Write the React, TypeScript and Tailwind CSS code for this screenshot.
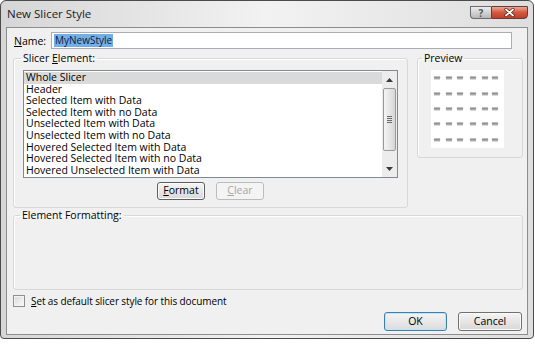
import React from "react";

const items = [
  "Whole Slicer",
  "Header",
  "Selected Item with Data",
  "Selected Item with no Data",
  "Unselected Item with Data",
  "Unselected Item with no Data",
  "Hovered Selected Item with Data",
  "Hovered Selected Item with no Data",
  "Hovered Unselected Item with Data",
];

function U({ c }: { c: string }) {
  return <span className="underline underline-offset-[1px] decoration-[1px]">{c}</span>;
}

function PreviewGrid() {
  const xs = [3, 15, 26, 39, 51, 61];
  const ys = [6, 22, 37, 52, 68];
  const paths: string[] = [];
  for (const y of ys) {
    for (const x of xs) {
      let d = `M${x} ${y + 2}`;
      for (let i = 1; i <= 6; i++) {
        d += ` L${x + i} ${i % 2 === 0 ? y + 2 : y + 0.4}`;
      }
      d += ` M${x} ${y + 2.8} L${x + 6} ${y + 2.8}`;
      paths.push(d);
    }
  }
  return (
    <svg width="73" height="78" viewBox="0 0 73 78">
      {paths.map((d, i) => (
        <path key={i} d={d} fill="none" stroke="#666666" strokeWidth="0.8" />
      ))}
    </svg>
  );
}

function Arrow({ up }: { up?: boolean }) {
  return (
    <svg width="7" height="4" viewBox="0 0 7 4">
      <polygon points={up ? "0,4 7,4 3.5,0" : "0,0 7,0 3.5,4"} fill="#3a3a3a" />
    </svg>
  );
}

export default function App() {
  return (
    <div className="w-[535px] h-[344px] bg-white font-['Open_Sans',sans-serif] text-[10.5px] text-black">
      <div className="w-[534px] h-[339px] flex flex-col border border-[#4b4b4b] rounded-t-[6px] rounded-b-[4px] bg-gradient-to-r from-[#d6d6d6] via-[#f2f2f2] to-[#dedede] px-[5px] pb-[3px]">
        {/* Title bar */}
        <div className="h-[26px] flex items-start justify-between">
          <div className="pl-[1px] pt-[5px] text-[11.5px] leading-[16px] text-[#1a1a1a]">New Slicer Style</div>
          <div className="flex mt-[5px]">
            <div className="w-[21px] h-[13px] flex items-center justify-center border border-[#6a6a6a] border-r-0 rounded-bl-[4px] bg-gradient-to-b from-[#ececec] to-[#b9b9b9] text-[10px] leading-[10px] font-bold text-[#555]">
              ?
            </div>
            <div className="w-[37px] h-[13px] flex items-center justify-center border border-[#6a3a34] rounded-br-[4px] bg-gradient-to-b from-[#e9a898] via-[#d2583f] to-[#c0402a]">
              <svg width="11" height="9" viewBox="0 0 11 9">
                <path d="M2 1.5 L9 7.5 M9 1.5 L2 7.5" stroke="#5a1c14" strokeWidth="3.2" strokeLinecap="round" />
                <path d="M2 1.5 L9 7.5 M9 1.5 L2 7.5" stroke="#ffffff" strokeWidth="1.8" strokeLinecap="round" />
              </svg>
            </div>
          </div>
        </div>

        {/* Client area */}
        <div className="flex-1 flex flex-col border border-[#8d8d8d] bg-[#f0f0f0] pl-[6px] pr-[4px]">
          {/* Name row */}
          <div className="mt-[4px] h-[17px] flex items-center">
            <div className="w-[38px] pl-[1px] leading-[14px]">
              <U c="N" />ame:
            </div>
            <div className="w-[461px] h-[17px] border border-[#abadb3] bg-white flex items-center pl-[2px]">
              <span className="bg-[#74aee8] text-[#0c1c3a] text-[10px] leading-[13px] px-[1px]">MyNewStyle</span>
            </div>
          </div>

          {/* Top groups */}
          <div className="mt-[2px] flex items-start gap-[9px]">
            <fieldset className="w-[395px] p-0 border border-[#d5d9dc] rounded-[3px] shadow-[inset_1px_1px_0_#ffffff]">
              <legend className="ml-[7px] px-[2px] leading-[14px]">
                Slicer <U c="E" />lement:
              </legend>
              <div className="px-[9px] pt-[5px] pb-[7px]">
                <div className="h-[108px] border border-[#828790] bg-white flex">
                  <div className="flex-1 pt-[1px]">
                    {items.map((t, i) => (
                      <div
                        key={t}
                        className={`h-[11.6px] leading-[11.6px] pl-[2px] whitespace-nowrap ${i === 0 ? "bg-[#dadada]" : ""}`}
                      >
                        {t}
                      </div>
                    ))}
                  </div>
                  <div className="w-[15px] bg-[#ececec] flex flex-col">
                    <div className="h-[17px] flex items-center justify-center">
                      <Arrow up />
                    </div>
                    <div className="mx-[1px] h-[63px] border border-[#9a9a9a] rounded-[2px] bg-gradient-to-r from-[#f4f4f4] via-[#e6e6e6] to-[#d6d6d6] flex flex-col items-center justify-center gap-[1px]">
                      <div className="w-[5px] h-[1px] bg-[#6a6a6a]" />
                      <div className="w-[5px] h-[1px] bg-[#6a6a6a]" />
                      <div className="w-[5px] h-[1px] bg-[#6a6a6a]" />
                      <div className="w-[5px] h-[1px] bg-[#6a6a6a]" />
                    </div>
                    <div className="flex-1" />
                    <div className="h-[17px] flex items-center justify-center">
                      <Arrow />
                    </div>
                  </div>
                </div>
                <div className="mt-[4px] flex justify-center gap-[11px]">
                  <div className="w-[48px] h-[18px] flex items-center justify-center border border-[#5f5f5f] rounded-[3px] bg-gradient-to-b from-[#f5f5f5] to-[#d9d9d9] shadow-[inset_0_0_0_1px_#fbfbfb]">
                    <span>
                      <U c="F" />ormat
                    </span>
                  </div>
                  <div className="w-[48px] h-[18px] flex items-center justify-center border border-[#bcbcbc] rounded-[3px] bg-[#f4f4f4] text-[#a6a6a6]">
                    <span>
                      <U c="C" />lear
                    </span>
                  </div>
                </div>
              </div>
            </fieldset>

            <fieldset className="w-[106px] p-0 border border-[#d5d9dc] rounded-[3px] shadow-[inset_1px_1px_0_#ffffff]">
              <legend className="ml-[4px] px-[2px] leading-[14px]">Preview</legend>
              <div className="pl-[13px] pt-[5px] pb-[9px]">
                <div className="w-[73px] h-[78px] bg-white">
                  <PreviewGrid />
                </div>
              </div>
            </fieldset>
          </div>

          {/* Element Formatting */}
          <fieldset className="h-[82px] p-0 border border-[#d5d9dc] rounded-[3px] shadow-[inset_1px_1px_0_#ffffff]">
            <legend className="ml-[6px] px-[2px] leading-[14px]">Element Formatting:</legend>
          </fieldset>

          {/* Checkbox */}
          <div className="mt-[5px] h-[12px] flex items-center gap-[6px]">
            <div className="w-[12px] h-[12px] border border-[#8f8f8f] bg-gradient-to-br from-[#d8d8d8] to-[#fbfbfb] shadow-[inset_0_0_0_1px_#f4f4f4]" />
            <span className="leading-[12px] text-[10px] tracking-[-0.1px]">
              <U c="S" />et as default slicer style for this document
            </span>
          </div>

          {/* OK / Cancel */}
          <div className="mt-[5px] flex justify-end gap-[11px] mr-[1px]">
            <div className="w-[63px] h-[19px] flex items-center justify-center border border-[#3c7fb1] rounded-[3px] bg-gradient-to-b from-[#f4f4f4] to-[#dcdcdc] shadow-[inset_0_0_0_1px_#bfe4f7]">
              OK
            </div>
            <div className="w-[64px] h-[19px] flex items-center justify-center border border-[#707070] rounded-[3px] bg-gradient-to-b from-[#f4f4f4] to-[#d8d8d8] shadow-[inset_0_0_0_1px_#fafafa]">
              Cancel
            </div>
          </div>
        </div>
      </div>
    </div>
  );
}
